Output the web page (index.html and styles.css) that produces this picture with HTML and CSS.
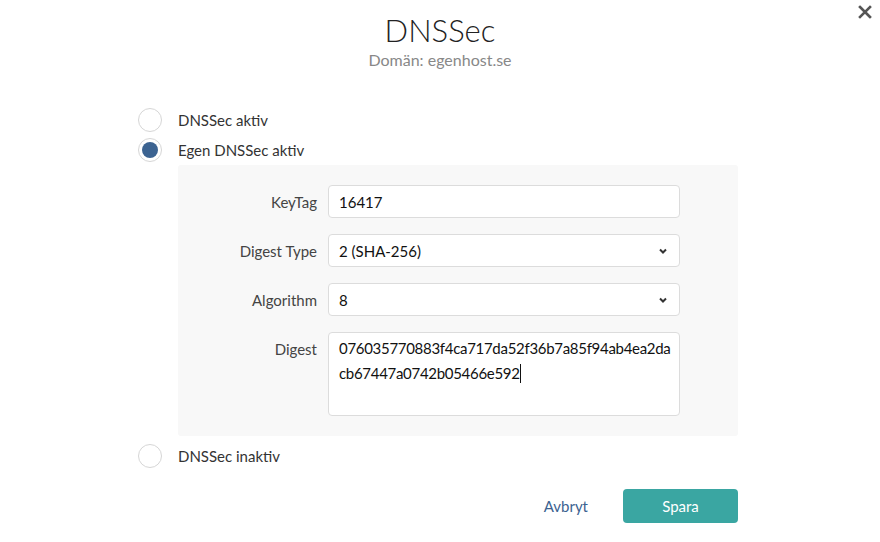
FILE: index.html
```html
<!DOCTYPE html>
<html lang="sv">
<head>
<meta charset="utf-8">
<link rel="stylesheet" href="styles.css">
</head>
<body>
<div class="modal">
  <button class="close" aria-label="Stäng">
    <svg width="14" height="14" viewBox="0 0 14 14"><path d="M2 2L12 12M12 2L2 12" stroke="#555" stroke-width="2.6" stroke-linecap="square"/></svg>
  </button>
  <header class="head">
    <h1 class="title">DNSSec</h1>
    <div class="subtitle">Domän: egenhost.se</div>
  </header>
  <div class="options">
    <label class="radio"><span class="dot"></span><span>DNSSec aktiv</span></label>
    <label class="radio checked"><span class="dot"></span><span>Egen DNSSec aktiv</span></label>
    <div class="panel">
      <div class="row">
        <div class="lbl">KeyTag</div>
        <div class="field">16417</div>
      </div>
      <div class="row">
        <div class="lbl">Digest Type</div>
        <div class="field select">2 (SHA-256)<span class="chev"><svg width="8" height="6" viewBox="0 0 8 6"><path d="M1 1.5L4 4.5L7 1.5" stroke="#333" stroke-width="2" fill="none"/></svg></span></div>
      </div>
      <div class="row">
        <div class="lbl">Algorithm</div>
        <div class="field select">8<span class="chev"><svg width="8" height="6" viewBox="0 0 8 6"><path d="M1 1.5L4 4.5L7 1.5" stroke="#333" stroke-width="2" fill="none"/></svg></span></div>
      </div>
      <div class="row top">
        <div class="lbl">Digest</div>
        <div class="field area"><span class="line">076035770883f4ca717da52f36b7a85f94ab4ea2da</span><span class="line">cb67447a0742b05466e592<span class="caret"></span></span></div>
      </div>
    </div>
    <label class="radio"><span class="dot"></span><span>DNSSec inaktiv</span></label>
  </div>
  <div class="actions">
    <span class="cancel">Avbryt</span>
    <span class="save">Spara</span>
  </div>
</div>
</body>
</html>
```

FILE: styles.css
```css
* { box-sizing: border-box; }
html, body { margin: 0; padding: 0; background: #fff; }
body {
  font-family: "Source Sans Pro", Lato, "Liberation Sans", sans-serif;
  color: #333;
  width: 880px;
  height: 542px;
  overflow: hidden;
}
.modal { position: relative; width: 880px; height: 542px; padding-top: 10px; }
.close {
  position: absolute; right: 8px; top: 5px;
  border: 0; background: none; padding: 0;
  width: 14px; height: 14px;
}
.close svg { display: block; }
.head { text-align: center; }
.title {
  margin: 0; font-weight: 300; font-size: 31px; line-height: 40px; color: #222;
}
.subtitle { font-size: 16px; color: #888; line-height: 20px; margin-top: 0; }
.options { margin: 35px 0 0 138px; width: 600px; }
.radio {
  display: flex; align-items: center; height: 30px; font-size: 15px; color: #333;
}
.dot {
  width: 24px; height: 24px; border-radius: 50%; border: 1px solid #d6d6d6;
  background: #fff; margin-right: 16px; flex: none; position: relative;
}
.checked .dot::after {
  content: ""; position: absolute; left: 3px; top: 3px; width: 16px; height: 16px;
  border-radius: 50%; background: #3c6391;
}
.panel {
  margin: 0 0 5px 40px; background: #f8f8f8; border-radius: 3px;
  padding: 20px 58px 20px 0;
  display: flex; flex-direction: column; gap: 16px;
}
.row { display: flex; align-items: center; }
.row.top { align-items: flex-start; }
.lbl {
  width: 150px; flex: none; padding-right: 11px; text-align: right; font-size: 15px; color: #444;
}
.row.top .lbl { padding-top: 8px; }
.field {
  flex: 1; min-width: 0; height: 33px; background: #fff; border: 1px solid #dcdcdc; border-radius: 4px;
  padding: 0 10px; font-size: 15px; color: #111; display: flex; align-items: center;
  position: relative;
}
.chev { position: absolute; right: 12px; top: 13px; line-height: 0; }
.area {
  height: 84px; display: block; padding: 3px 10px; line-height: 25px;
  white-space: nowrap; overflow: hidden;
}
.line { display: block; letter-spacing: -0.3px; }
.caret { display: inline-block; width: 1px; height: 19px; background: #111; vertical-align: -4px; }
.actions {
  display: flex; justify-content: flex-end; align-items: center;
  width: 738px; margin-top: 18px;
}
.cancel { color: #3c6391; font-size: 15px; margin-right: 35px; }
.save {
  width: 115px; height: 34px; border-radius: 4px; background: #3aa6a2; color: #fff;
  font-size: 15px; display: flex; align-items: center; justify-content: center;
}
```
